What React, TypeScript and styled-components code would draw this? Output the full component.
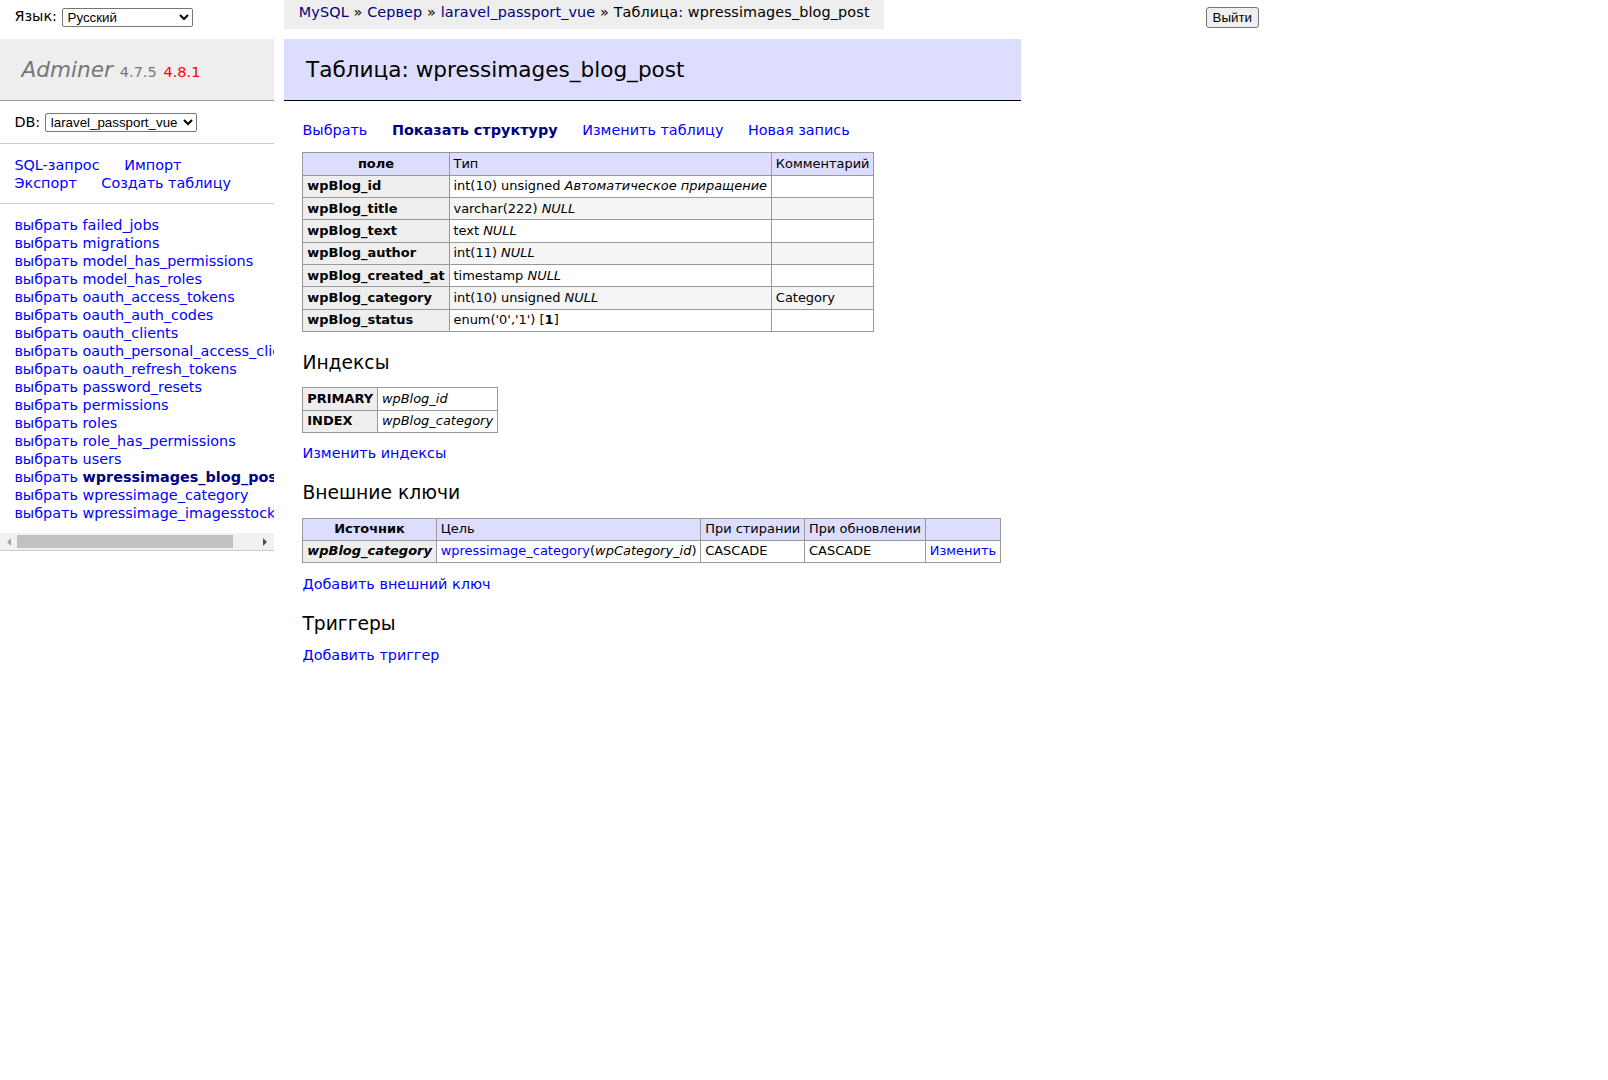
import React from "react";
import styled, { createGlobalStyle } from "styled-components";

const GlobalStyle = createGlobalStyle`
  html, body { margin: 0; padding: 0; background: #fff; }
  body {
    color: #000;
    font: 14.4px/1.25 Verdana, "DejaVu Sans", sans-serif;
  }
`;

const Page = styled.div`
  display: flex;
  align-items: flex-start;
  width: 100%;
`;

const Sidebar = styled.div`
  flex: none;
  width: 273.6px;
`;

const LangBar = styled.div`
  box-sizing: border-box;
  height: 28.8px;
  padding: 4.32px 14.4px 0;
  line-height: 25.92px;
  white-space: nowrap;
`;

const NativeSelect = styled.select<{ $w: number; $top?: boolean }>`
  font: 13.33px "Liberation Sans", Arial, sans-serif;
  width: ${(p) => p.$w}px;
  height: 19px;
  vertical-align: ${(p) => (p.$top ? "top" : "middle")};
  color: #000;
  background: #fff;
  border: 1px solid #767676;
  border-radius: 2px;
  padding: 0 0 0 1px;
`;

const Menu = styled.div`
  margin-top: 10px;
  padding-bottom: 30px;
`;

const Logo = styled.h1`
  box-sizing: border-box;
  height: 62.56px;
  margin: 0;
  padding: 17.28px 21.6px;
  font-size: 21.6px;
  line-height: 27px;
  font-weight: normal;
  background: #eee;
  border-bottom: 1px solid #999;
  white-space: nowrap;
  overflow: hidden;
`;

const LogoLink = styled.a`
  color: #777;
  font-style: italic;
  text-decoration: none;
`;

const Version = styled.span<{ $new?: boolean }>`
  font-size: 14.47px;
  line-height: 1;
  color: ${(p) => (p.$new ? "red" : "#777")};
`;

const MenuBlock = styled.p`
  margin: 0;
  padding: 11.52px 14.4px;
  line-height: 18px;
  border-bottom: 1px solid #ccc;
`;

const Link = styled.a<{ $visited?: boolean; $active?: boolean }>`
  color: ${(p) => (p.$visited ? "navy" : "blue")};
  font-weight: ${(p) => (p.$active ? "bold" : "normal")};
  text-decoration: none;
  cursor: pointer;
`;

const SpacedLink = styled(Link)`
  margin-right: 20px;
  white-space: nowrap;
`;

const TablesBox = styled.div`
  border-bottom: 1px solid #ccc;
`;

const TableList = styled.ul`
  margin: 0;
  padding: 11.52px 14.4px;
  white-space: nowrap;
  overflow: hidden;
`;

const TableItem = styled.li`
  list-style: none;
`;

const ScrollBar = styled.div`
  display: flex;
  align-items: center;
  height: 17px;
  background: #f1f1f1;
`;

const ScrollArrow = styled.div<{ $dir: "left" | "right"; $disabled?: boolean }>`
  flex: none;
  width: 17px;
  height: 17px;
  display: flex;
  align-items: center;
  justify-content: center;
  &::before {
    content: "";
    width: 0;
    height: 0;
    border-top: 4px solid transparent;
    border-bottom: 4px solid transparent;
    ${(p) =>
      p.$dir === "left"
        ? `border-right: 4px solid ${p.$disabled ? "#a3a3a3" : "#505050"};`
        : `border-left: 4px solid ${p.$disabled ? "#a3a3a3" : "#505050"};`}
  }
`;

const ScrollThumb = styled.div`
  flex: none;
  width: 216px;
  height: 13px;
  background: #c1c1c1;
`;

const ScrollRest = styled.div`
  flex: 1;
`;

const Main = styled.div`
  flex: none;
  margin-left: 10.8px;
  display: flex;
  flex-direction: column;
  align-items: stretch;
`;

const Breadcrumb = styled.div`
  align-self: flex-start;
  height: 28.8px;
  line-height: 25.92px;
  padding: 0 14.4px;
  background: #eee;
  white-space: nowrap;
  letter-spacing: 0.12px;
`;

const Content = styled.div`
  padding: 10px 20px 20px 18px;
`;

const Title = styled.h2`
  margin: 0 0 20px -18px;
  padding: 17.28px 21.6px;
  font-size: 21.6px;
  line-height: 27px;
  font-weight: normal;
  color: #000;
  background: #ddf;
  border-bottom: 1px solid #000;
`;

const Para = styled.p`
  margin: 11.52px 20px 0 0;
`;

const SectionTitle = styled.h3`
  margin: 18.72px 0 0;
  font-size: 18.72px;
  line-height: 23.4px;
  font-weight: normal;
`;

const Table = styled.table<{ $odds?: boolean }>`
  margin: 12.96px 20px 0 0;
  border-collapse: collapse;
  font-size: 12.96px;
  line-height: 16.2px;
  ${(p) => (p.$odds ? "tbody tr:nth-child(2n) { background: #f5f5f5; }" : "")}
`;

const HeadCell = styled.th`
  border: 1px solid #999;
  padding: 2.59px 6.48px;
  background: #ddf;
  text-align: center;
  font-weight: bold;
  white-space: nowrap;
`;

const HeadTd = styled.td`
  border: 1px solid #999;
  padding: 2.59px 3.89px;
  background: #ddf;
  white-space: nowrap;
`;

const RowHead = styled.th`
  border: 1px solid #999;
  padding: 2.59px 3.89px;
  background: #eee;
  text-align: left;
  font-weight: bold;
  white-space: nowrap;
`;

const Cell = styled.td`
  border: 1px solid #999;
  padding: 2.59px 3.89px;
  white-space: nowrap;
`;

const LogoutArea = styled.div`
  flex: 1;
  display: flex;
  justify-content: flex-end;
  padding-right: 349px;
`;

const LogoutButton = styled.button`
  margin-top: 7.2px;
  height: 21px;
  padding: 1px 6px;
  font: 13.33px "Liberation Sans", Arial, sans-serif;
  color: #000;
  background: #efefef;
  border: 1px solid #767676;
  border-radius: 3px;
`;

const tables = [
  "failed_jobs",
  "migrations",
  "model_has_permissions",
  "model_has_roles",
  "oauth_access_tokens",
  "oauth_auth_codes",
  "oauth_clients",
  "oauth_personal_access_clients",
  "oauth_refresh_tokens",
  "password_resets",
  "permissions",
  "roles",
  "role_has_permissions",
  "users",
  "wpressimages_blog_post",
  "wpressimage_category",
  "wpressimage_imagesstock",
];

const ACTIVE = "wpressimages_blog_post";

type Field = { name: string; type: React.ReactNode; comment: string };

const fields: Field[] = [
  { name: "wpBlog_id", type: <>int(10) unsigned <i>Автоматическое приращение</i></>, comment: "" },
  { name: "wpBlog_title", type: <>varchar(222) <i>NULL</i></>, comment: "" },
  { name: "wpBlog_text", type: <>text <i>NULL</i></>, comment: "" },
  { name: "wpBlog_author", type: <>int(11) <i>NULL</i></>, comment: "" },
  { name: "wpBlog_created_at", type: <>timestamp <i>NULL</i></>, comment: "" },
  { name: "wpBlog_category", type: <>int(10) unsigned <i>NULL</i></>, comment: "Category" },
  { name: "wpBlog_status", type: <>enum('0','1') [<b>1</b>]</>, comment: "" },
];

export default function App() {
  return (
    <>
      <GlobalStyle />
      <Page>
        <Sidebar>
          <LangBar>
            Язык:{" "}
            <NativeSelect $w={131} defaultValue="ru">
              <option value="ru">Русский</option>
              <option value="en">English</option>
            </NativeSelect>
          </LangBar>
          <Menu>
            <Logo>
              <LogoLink>Adminer</LogoLink> <Version>4.7.5</Version>{" "}
              <Version $new>4.8.1</Version>
            </Logo>
            <MenuBlock>
              DB:{" "}
              <NativeSelect $w={152} $top defaultValue="lpv">
                <option value="lpv">laravel_passport_vue</option>
              </NativeSelect>
            </MenuBlock>
            <MenuBlock>
              <SpacedLink>SQL-запрос</SpacedLink> <SpacedLink>Импорт</SpacedLink>{" "}
              <SpacedLink>Экспорт</SpacedLink> <SpacedLink>Создать таблицу</SpacedLink>
            </MenuBlock>
            <TablesBox>
              <TableList>
                {tables.map((t) => (
                  <TableItem key={t}>
                    <Link>выбрать</Link>{" "}
                    <Link $visited={t === ACTIVE} $active={t === ACTIVE}>
                      {t}
                    </Link>
                  </TableItem>
                ))}
              </TableList>
              <ScrollBar>
                <ScrollArrow $dir="left" $disabled />
                <ScrollThumb />
                <ScrollRest />
                <ScrollArrow $dir="right" />
              </ScrollBar>
            </TablesBox>
          </Menu>
        </Sidebar>

        <Main>
          <Breadcrumb>
            <Link $visited>MySQL</Link> » <Link $visited>Сервер</Link> »{" "}
            <Link $visited>laravel_passport_vue</Link> » Таблица: wpressimages_blog_post
          </Breadcrumb>
          <Content>
            <Title>Таблица: wpressimages_blog_post</Title>
            <Para>
              <SpacedLink>Выбрать</SpacedLink>{" "}
              <SpacedLink $visited $active>
                Показать структуру
              </SpacedLink>{" "}
              <SpacedLink>Изменить таблицу</SpacedLink> <SpacedLink>Новая запись</SpacedLink>
            </Para>

            <Table $odds>
              <thead>
                <tr>
                  <HeadCell>поле</HeadCell>
                  <HeadTd>Тип</HeadTd>
                  <HeadTd>Комментарий</HeadTd>
                </tr>
              </thead>
              <tbody>
                {fields.map((f) => (
                  <tr key={f.name}>
                    <RowHead>{f.name}</RowHead>
                    <Cell>{f.type}</Cell>
                    <Cell>{f.comment}</Cell>
                  </tr>
                ))}
              </tbody>
            </Table>

            <SectionTitle>Индексы</SectionTitle>
            <Table>
              <tbody>
                <tr>
                  <RowHead>PRIMARY</RowHead>
                  <Cell>
                    <i>wpBlog_id</i>
                  </Cell>
                </tr>
                <tr>
                  <RowHead>INDEX</RowHead>
                  <Cell>
                    <i>wpBlog_category</i>
                  </Cell>
                </tr>
              </tbody>
            </Table>
            <Para>
              <Link>Изменить индексы</Link>
            </Para>

            <SectionTitle>Внешние ключи</SectionTitle>
            <Table>
              <thead>
                <tr>
                  <HeadCell>Источник</HeadCell>
                  <HeadTd>Цель</HeadTd>
                  <HeadTd>При стирании</HeadTd>
                  <HeadTd>При обновлении</HeadTd>
                  <HeadTd></HeadTd>
                </tr>
              </thead>
              <tbody>
                <tr>
                  <RowHead>
                    <i>wpBlog_category</i>
                  </RowHead>
                  <Cell>
                    <Link>wpressimage_category</Link>(<i>wpCategory_id</i>)
                  </Cell>
                  <Cell>CASCADE</Cell>
                  <Cell>CASCADE</Cell>
                  <Cell>
                    <Link>Изменить</Link>
                  </Cell>
                </tr>
              </tbody>
            </Table>
            <Para>
              <Link>Добавить внешний ключ</Link>
            </Para>

            <SectionTitle>Триггеры</SectionTitle>
            <Para>
              <Link>Добавить триггер</Link>
            </Para>
          </Content>
        </Main>

        <LogoutArea>
          <LogoutButton>Выйти</LogoutButton>
        </LogoutArea>
      </Page>
    </>
  );
}
